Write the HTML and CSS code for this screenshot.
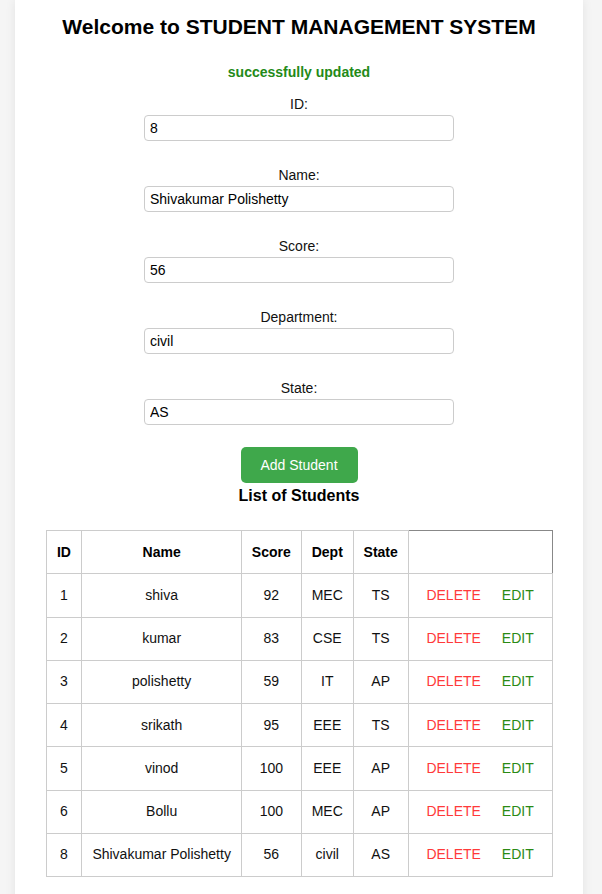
FILE: index.html
```html
<!DOCTYPE html>
<html>
<head>
<meta charset="utf-8">
<link rel="stylesheet" href="styles.css">
</head>
<body>
<div class="container">
  <h1 class="title">Welcome to STUDENT MANAGEMENT SYSTEM</h1>
  <p class="message">successfully updated</p>
  <form class="form">
    <div class="field">
      <label class="label">ID:</label>
      <input class="input" type="text" value="8">
    </div>
    <div class="field">
      <label class="label">Name:</label>
      <input class="input" type="text" value="Shivakumar Polishetty">
    </div>
    <div class="field">
      <label class="label">Score:</label>
      <input class="input" type="text" value="56">
    </div>
    <div class="field">
      <label class="label">Department:</label>
      <input class="input" type="text" value="civil">
    </div>
    <div class="field last">
      <label class="label">State:</label>
      <input class="input" type="text" value="AS">
    </div>
    <button class="add-btn" type="button">Add Student</button>
  </form>
  <h2 class="subtitle">List of Students</h2>
  <table class="table">
    <thead>
      <tr>
        <th class="c-id">ID</th>
        <th class="c-name">Name</th>
        <th class="c-score">Score</th>
        <th class="c-dept">Dept</th>
        <th class="c-state">State</th>
        <th class="c-act empty"></th>
      </tr>
    </thead>
    <tbody>
      <tr><td>1</td><td>shiva</td><td>92</td><td>MEC</td><td>TS</td><td><span class="del">DELETE</span><span class="edit">EDIT</span></td></tr>
      <tr><td>2</td><td>kumar</td><td>83</td><td>CSE</td><td>TS</td><td><span class="del">DELETE</span><span class="edit">EDIT</span></td></tr>
      <tr><td>3</td><td>polishetty</td><td>59</td><td>IT</td><td>AP</td><td><span class="del">DELETE</span><span class="edit">EDIT</span></td></tr>
      <tr><td>4</td><td>srikath</td><td>95</td><td>EEE</td><td>TS</td><td><span class="del">DELETE</span><span class="edit">EDIT</span></td></tr>
      <tr><td>5</td><td>vinod</td><td>100</td><td>EEE</td><td>AP</td><td><span class="del">DELETE</span><span class="edit">EDIT</span></td></tr>
      <tr><td>6</td><td>Bollu</td><td>100</td><td>MEC</td><td>AP</td><td><span class="del">DELETE</span><span class="edit">EDIT</span></td></tr>
      <tr><td>8</td><td>Shivakumar Polishetty</td><td>56</td><td>civil</td><td>AS</td><td><span class="del">DELETE</span><span class="edit">EDIT</span></td></tr>
    </tbody>
  </table>
</div>
</body>
</html>
```

FILE: styles.css
```css
html, body {
  margin: 0;
  padding: 0;
}
body {
  background: #f5f5f5;
  font-family: "Liberation Sans", Arial, sans-serif;
  font-size: 14px;
  color: #000;
}
.container {
  width: 568px;
  margin: 0 0 0 15px;
  background: #fff;
  box-shadow: 0 0 10px rgba(0, 0, 0, 0.08);
  padding: 15px 0 30px;
  min-height: 900px;
  box-sizing: border-box;
}
.title {
  margin: 0;
  font-size: 21px;
  line-height: 24px;
  font-weight: bold;
  text-align: center;
}
.message {
  margin: 25px 0 0;
  font-size: 14px;
  line-height: 16px;
  font-weight: bold;
  color: #238a18;
  text-align: center;
}
.form {
  display: flex;
  flex-direction: column;
  align-items: center;
  margin-top: 16px;
}
.field {
  display: flex;
  flex-direction: column;
  align-items: center;
  margin-bottom: 26px;
}
.field.last {
  margin-bottom: 22px;
}
.label {
  display: block;
  line-height: 16px;
  margin-bottom: 3px;
  color: #111;
}
.input {
  width: 310px;
  height: 26px;
  box-sizing: border-box;
  border: 1px solid #ccc;
  border-radius: 4px;
  padding: 0 5px;
  font-family: "Liberation Sans", Arial, sans-serif;
  font-size: 14px;
  color: #000;
  outline: none;
}
.add-btn {
  width: 117px;
  height: 36px;
  border: none;
  border-radius: 5px;
  background: #3fa84b;
  color: #fff;
  font-family: "Liberation Sans", Arial, sans-serif;
  font-size: 14px;
  padding: 0;
}
.subtitle {
  margin: 4px 0 0;
  font-size: 16px;
  line-height: 18px;
  font-weight: bold;
  text-align: center;
}
.table {
  margin: 25px auto 0;
  border-collapse: collapse;
  width: 507px;
}
.table th, .table td {
  border: 1px solid #ccc;
  padding: 0 6px;
  height: 43.25px;
  text-align: center;
  font-size: 14px;
  line-height: 17px;
  box-sizing: border-box;
}
.table th {
  font-weight: bold;
}
.table td {
  color: #111;
}
.table th.empty {
  border-top: 1px solid #888;
  border-right: 1px solid #888;
}
.c-id { width: 36px; }
.c-name { width: 160px; }
.c-score { width: 60px; }
.c-dept { width: 52px; }
.c-state { width: 55px; }
.c-act { width: 144px; }
.del {
  color: #ff3a3a;
}
.edit {
  color: #2b8a14;
  margin-left: 21px;
}
```
